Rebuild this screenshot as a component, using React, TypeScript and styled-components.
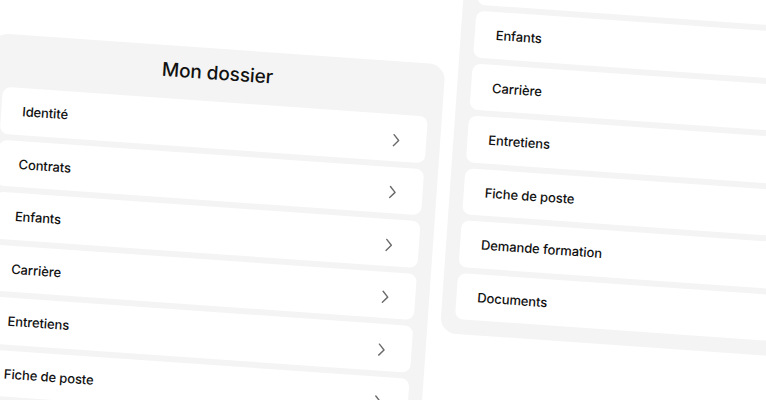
import React from "react";
import styled, { createGlobalStyle } from "styled-components";

const Global = createGlobalStyle`
  html, body { margin: 0; padding: 0; background: #ffffff; overflow: hidden; }
  body { width: 766px; height: 400px; font-family: Inter, "Noto Sans", "Liberation Sans", sans-serif; }
`;

const Viewport = styled.div`
  width: 766px;
  height: 400px;
  overflow: hidden;
  position: relative;
`;

const Scene = styled.div`
  display: flex;
  align-items: flex-start;
  gap: 13px;
  width: 1000px;
  margin-left: -5px;
  padding-top: 33px;
  transform: rotate(4deg);
  transform-origin: 0 0;
`;

const Card = styled.section<{ $shift?: number }>`
  flex: 0 0 454px;
  box-sizing: border-box;
  background: #f4f4f4;
  border-radius: 16px;
  padding: 4px 14px 15px;
  margin-top: ${(p) => p.$shift ?? 0}px;
  display: flex;
  flex-direction: column;
`;

const Title = styled.h2`
  margin: 0 0 9px;
  height: 40px;
  display: flex;
  align-items: center;
  justify-content: center;
  font-size: 19px;
  font-weight: 500;
  color: #111;
  letter-spacing: -0.1px;
`;

const List = styled.ul`
  list-style: none;
  margin: 0;
  padding: 0;
  display: flex;
  flex-direction: column;
  gap: 6px;
`;

const Row = styled.li`
  height: 46.5px;
  box-sizing: border-box;
  background: #ffffff;
  border-radius: 8px;
  padding: 0 25px 0 21px;
  display: flex;
  align-items: center;
  justify-content: space-between;
  font-size: 13px;
  font-weight: 500;
  letter-spacing: -0.1px;
  color: #111;
`;

const ChevronIcon = styled.svg`
  flex: none;
  margin-top: 5px;
`;

const Chevron = () => (
  <ChevronIcon width="10" height="14" viewBox="0 0 10 14" fill="none">
    <path d="M2.5 1.5 L7.5 7 L2.5 12.5" stroke="#6b6b6b" strokeWidth="1.4" strokeLinecap="round" strokeLinejoin="round" />
  </ChevronIcon>
);

const items = [
  "Identité",
  "Contrats",
  "Enfants",
  "Carrière",
  "Entretiens",
  "Fiche de poste",
  "Demande formation",
  "Documents",
];

const Dossier = ({ shift }: { shift?: number }) => (
  <Card $shift={shift}>
    <Title>Mon dossier</Title>
    <List>
      {items.map((it) => (
        <Row key={it}>
          <span>{it}</span>
          <Chevron />
        </Row>
      ))}
    </List>
  </Card>
);

export default function App() {
  return (
    <Viewport>
      <Global />
      <Scene>
        <Dossier />
        <Dossier shift={-214} />
      </Scene>
    </Viewport>
  );
}
